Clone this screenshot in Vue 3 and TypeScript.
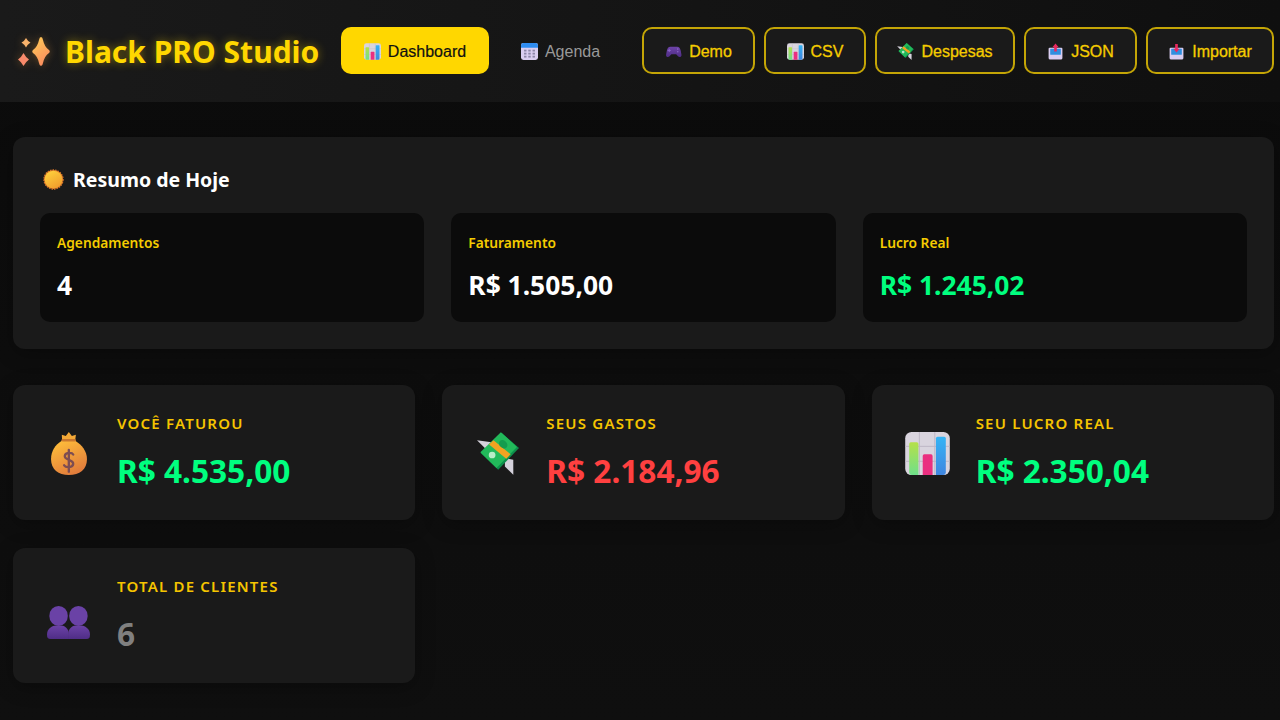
<script setup lang="ts">
interface NavButton {
  label: string
  icon: string
  kind: 'active' | 'plain' | 'outline'
  width: number
}

interface StatCard {
  label: string
  value: string
  icon: string
  tone: string
}

const navButtons: NavButton[] = [
  { label: 'Dashboard', icon: 'chart', kind: 'active', width: 148 },
  { label: 'Agenda', icon: 'calendar', kind: 'plain', width: 125 },
  { label: 'Demo', icon: 'gamepad', kind: 'outline', width: 113 },
  { label: 'CSV', icon: 'chart', kind: 'outline', width: 102 },
  { label: 'Despesas', icon: 'money', kind: 'outline', width: 140 },
  { label: 'JSON', icon: 'outbox', kind: 'outline', width: 113 },
  { label: 'Importar', icon: 'inbox', kind: 'outline', width: 128 }
]

const summary = [
  { label: 'Agendamentos', value: '4', tone: 'white' },
  { label: 'Faturamento', value: 'R$ 1.505,00', tone: 'white' },
  { label: 'Lucro Real', value: 'R$ 1.245,02', tone: 'green' }
]

const stats: StatCard[] = [
  { label: 'VOCÊ FATUROU', value: 'R$ 4.535,00', icon: 'bag', tone: 'green' },
  { label: 'SEUS GASTOS', value: 'R$ 2.184,96', icon: 'money', tone: 'red' },
  { label: 'SEU LUCRO REAL', value: 'R$ 2.350,04', icon: 'chart', tone: 'green' },
  { label: 'TOTAL DE CLIENTES', value: '6', icon: 'people', tone: 'grey' }
]
</script>

<template>
  <div class="page">
    <!-- shared icon shapes -->
    <svg class="sprite" aria-hidden="true">
      <defs>
        <linearGradient id="g-star" x1="0" y1="0" x2="0.5" y2="1">
          <stop offset="0" stop-color="#ffcf55" />
          <stop offset="1" stop-color="#fb8f5f" />
        </linearGradient>
        <linearGradient id="g-sun" x1="0.2" y1="0" x2="0.8" y2="1">
          <stop offset="0" stop-color="#ffd23c" />
          <stop offset="1" stop-color="#f09a2c" />
        </linearGradient>
        <linearGradient id="g-bag" x1="0.2" y1="0" x2="0.7" y2="1">
          <stop offset="0" stop-color="#ffbe3a" />
          <stop offset="1" stop-color="#e0793c" />
        </linearGradient>
        <linearGradient id="g-lime" x1="0" y1="0" x2="0" y2="1">
          <stop offset="0" stop-color="#b5e04a" />
          <stop offset="1" stop-color="#6fe08a" />
        </linearGradient>
        <linearGradient id="g-blue" x1="0" y1="0" x2="0" y2="1">
          <stop offset="0" stop-color="#35b4f5" />
          <stop offset="1" stop-color="#3f86e0" />
        </linearGradient>
        <linearGradient id="g-purple" x1="0" y1="0" x2="0" y2="1">
          <stop offset="0" stop-color="#6d43a8" />
          <stop offset="1" stop-color="#4f2d86" />
        </linearGradient>
      </defs>
      <symbol id="i-sparkles" viewBox="0 0 32 29">
        <path d="M23 0Q24.500 0 25 3Q26.500 10 31 13Q32.500 14.500 31 16Q26.500 19 25 26Q24.500 29 23 29Q21.500 29 21 26Q19.500 19 15 16Q13.500 14.500 15 13Q19.500 10 21 3Q21.500 0 23 0z" fill="url(#g-star)" />
        <path d="M8 1Q9.500 4 12.500 5.500Q9.500 7.500 8 10.500Q6.500 7.500 3.500 5.500Q6.500 4 8 1z" fill="#f9b36b" />
        <path d="M5.500 16Q7.500 20 11 22.500Q7.500 25 5.500 29Q3.500 25 0 22.500Q3.500 20 5.500 16z" fill="#f98a6b" />
      </symbol>
      <symbol id="i-sun" viewBox="0 0 32 32">
        <circle cx="16" cy="16" r="14.500" fill="#e8852c" stroke="#d9772a" stroke-width="2" stroke-dasharray="2.400 1.500" />
        <circle cx="16" cy="16" r="13.500" fill="url(#g-sun)" />
      </symbol>
      <symbol id="i-chart" viewBox="0 0 28 27">
        <rect width="28" height="27" rx="4" fill="#d9d4de" />
        <path d="M0 9h28M0 18.400h28M8.900 0v27M18.600 0v27" stroke="#bdb6c4" stroke-width="0.6" />
        <path d="M2.500 7.500a1 1 0 0 1 1-1h3.800a1 1 0 0 1 1 1V27H4a1.500 1.500 0 0 1-1.500-1.500z" fill="url(#g-lime)" />
        <path d="M11 15a1 1 0 0 1 1-1h4.200a1 1 0 0 1 1 1v12H11z" fill="#ea2f80" />
        <path d="M19.300 4a1 1 0 0 1 1-1h4.200a1 1 0 0 1 1 1v21.500A1.500 1.500 0 0 1 24 27h-4.700z" fill="url(#g-blue)" />
      </symbol>
      <symbol id="i-calendar" viewBox="0 0 28 28">
        <rect width="28" height="28" rx="4" fill="#d9cdf0" />
        <path d="M0 8V4a4 4 0 0 1 4-4h20a4 4 0 0 1 4 4v4z" fill="#2e8cf0" />
        <g fill="#8d86a8">
          <rect x="5" y="11" width="4" height="3" /><rect x="12" y="11" width="4" height="3" /><rect x="19" y="11" width="4" height="3" />
          <rect x="5" y="16" width="4" height="3" /><rect x="12" y="16" width="4" height="3" /><rect x="19" y="16" width="4" height="3" />
          <rect x="5" y="21" width="4" height="3" /><rect x="12" y="21" width="4" height="3" /><rect x="19" y="21" width="4" height="3" />
        </g>
      </symbol>
      <symbol id="i-gamepad" viewBox="0 0 32 32">
        <path d="M9 7h14c3.500 0 5.500 2.500 6.500 7l1.500 8c.6 4-4 6-6.500 3l-3.500-4h-9l-3.500 4c-2.500 3-7.100 1-6.500-3l1.500-8c1-4.500 3-7 6.500-7z" fill="url(#g-purple)" />
        <path d="M8 11v6M5 14h6" stroke="#8a65c4" stroke-width="1.800" />
        <circle cx="24" cy="11.500" r="1.500" fill="#8a65c4" /><circle cx="24" cy="16.500" r="1.500" fill="#8a65c4" />
      </symbol>
      <symbol id="i-money" viewBox="0 0 125 127">
        <path d="M0 24L43 30 33 57z" fill="#d5d2dc" />
        <path d="M83 77L108 82 108 127 83 102z" fill="#d5d2dc" />
        <path d="M73 2L125 47 63 112 11 62z" fill="#0d8f4c" />
        <path d="M71 0L119 44 58 107 10 60z" fill="#22b95a" />
        <path d="M36 37L49 24 100 66 87 79z" fill="#f2a321" />
        <circle cx="45" cy="68" r="10" fill="#b8ecc8" />
        <ellipse cx="78" cy="36" rx="11" ry="14" fill="#149c4e" transform="rotate(-45 78 36)" />
      </symbol>
      <symbol id="i-outbox" viewBox="0 0 32 32">
        <path d="M5 9h22a2 2 0 0 1 2 2v17a3 3 0 0 1-3 3H6a3 3 0 0 1-3-3V11a2 2 0 0 1 2-2z" fill="#d9cdf0" />
        <rect x="6" y="11" width="20" height="11" rx="1" fill="#2f8fe0" />
        <path d="M16 1l6 7h-3.500v8h-5V8H10z" fill="#e8285f" />
      </symbol>
      <symbol id="i-inbox" viewBox="0 0 32 32">
        <path d="M5 9h22a2 2 0 0 1 2 2v17a3 3 0 0 1-3 3H6a3 3 0 0 1-3-3V11a2 2 0 0 1 2-2z" fill="#d9cdf0" />
        <rect x="6" y="11" width="20" height="11" rx="1" fill="#2f8fe0" />
        <path d="M16 18l-6-7h3.500V2h5v9H22z" fill="#e8285f" />
      </symbol>
      <symbol id="i-bag" viewBox="0 0 107 128">
        <path d="M33 24L32 8 44 12 53 0 62 12 74 8 72 24z" fill="#f4a937" />
        <path d="M32 26C12 38 0 58 0 80 0 112 22 128 53 128 85 128 107 112 107 80 107 58 92 38 72 26z" fill="url(#g-bag)" />
        <rect x="31" y="21" width="43" height="7" rx="3.500" fill="#c9772f" />
        <path d="M66 67C62 60 42 60 41 72 40 84 67 82 66 95 65 107 44 107 39 99M53 53v65" fill="none" stroke="#7d4d52" stroke-width="7" stroke-linecap="round" />
      </symbol>
      <symbol id="i-people" viewBox="0 0 130 100">
        <ellipse cx="35" cy="30" rx="28" ry="30" fill="#6a42a6" />
        <ellipse cx="95" cy="30" rx="28" ry="30" fill="#6a42a6" />
        <path d="M0 86C0 68 15 58 35 58 55 58 66 68 66 86V100H10Q0 100 0 86z" fill="url(#g-purple)" />
        <path d="M130 86C130 68 115 58 95 58 75 58 64 68 64 86V100H120Q130 100 130 86z" fill="url(#g-purple)" />
      </symbol>
    </svg>

    <header class="topbar">
      <div class="brand">
        <svg class="brand-icon"><use href="#i-sparkles" /></svg>
        <h1>Black PRO Studio</h1>
      </div>
      <nav class="nav">
        <button
          v-for="btn in navButtons"
          :key="btn.label"
          class="nav-btn"
          :class="btn.kind"
          :style="{ width: btn.width + 'px' }"
        >
          <svg class="nav-icon"><use :href="'#i-' + btn.icon" /></svg>
          {{ btn.label }}
        </button>
      </nav>
    </header>

    <main class="content">
      <section class="today">
        <h2>
          <svg class="sun"><use href="#i-sun" /></svg>
          Resumo de Hoje
        </h2>
        <div class="today-grid">
          <div v-for="item in summary" :key="item.label" class="today-item">
            <div class="today-label">{{ item.label }}</div>
            <div class="today-value" :class="item.tone">{{ item.value }}</div>
          </div>
        </div>
      </section>

      <section class="stats">
        <div v-for="card in stats" :key="card.label" class="stat">
          <div class="stat-icon">
            <svg :class="'icon-' + card.icon"><use :href="'#i-' + card.icon" /></svg>
          </div>
          <div class="stat-body">
            <div class="stat-label">{{ card.label }}</div>
            <div class="stat-value" :class="card.tone">{{ card.value }}</div>
          </div>
        </div>
      </section>
    </main>
  </div>
</template>

<style scoped>
.page {
  min-height: 720px;
  background: linear-gradient(180deg, #0b0b0b, #0f0f0f);
  font-family: "Noto Sans", "Open Sans", sans-serif;
  color: #fff;
  overflow: hidden;
}

.sprite {
  position: absolute;
  width: 0;
  height: 0;
}

.topbar {
  height: 102px;
  box-sizing: border-box;
  padding: 0 6px 2px 18px;
  display: flex;
  align-items: center;
  justify-content: space-between;
  background: linear-gradient(90deg, #1a1a1a, #0f0f0f);
}

.brand {
  display: flex;
  align-items: center;
  gap: 15px;
  margin-top: 2px;
}

.brand-icon {
  width: 32px;
  height: 29px;
  filter: drop-shadow(0 0 4px rgba(255, 170, 60, 0.35));
}

.brand h1 {
  margin: 0;
  font-size: 30px;
  font-weight: 700;
  color: #ffd700;
  text-shadow: 0 0 10px rgba(255, 215, 0, 0.45);
  white-space: nowrap;
}

.nav {
  display: flex;
  align-items: center;
  gap: 9px;
}

.nav-btn {
  height: 47px;
  box-sizing: border-box;
  display: flex;
  align-items: center;
  justify-content: center;
  gap: 7px;
  padding: 4px 0 0;
  border: 2px solid transparent;
  border-radius: 10px;
  font-family: "Liberation Sans", Arial, sans-serif;
  font-size: 16px;
  background: transparent;
}

.nav-btn.active {
  background: #ffd700;
  color: #111;
  -webkit-text-stroke: 0.2px currentColor;
}

.nav-btn.plain {
  color: #999;
  margin-right: 10px;
}

.nav-btn.outline {
  background: #1a1a1a;
  color: #f5cc00;
  border-color: #c4a506;
  -webkit-text-stroke: 0.3px currentColor;
}

.nav-icon {
  width: 17px;
  height: 17px;
  margin-top: -1px;
}

.content {
  padding: 35px 6px 0 13px;
}

.today {
  height: 212px;
  box-sizing: border-box;
  padding: 26px 27px;
  background: #1a1a1a;
  border-radius: 12px;
  box-shadow: 0 4px 20px rgba(0, 0, 0, 0.3);
}

.today h2 {
  margin: 0 0 18px;
  height: 32px;
  display: flex;
  align-items: center;
  gap: 9px;
  font-size: 19.5px;
  font-weight: 700;
  color: #fff;
}

.sun {
  width: 21px;
  height: 21px;
  margin-left: 3px;
}

.today-grid {
  display: grid;
  grid-template-columns: repeat(3, 1fr);
  gap: 27px;
}

.today-item {
  height: 109px;
  box-sizing: border-box;
  padding: 20px 17px;
  background: #0b0b0b;
  border-radius: 10px;
}

.today-label {
  font-size: 13.75px;
  font-weight: 600;
  color: #f5cc00;
}

.today-value {
  margin-top: 15px;
  font-size: 26.4px;
  font-weight: 700;
}

.white {
  color: #fff;
}

.green {
  color: #00ff7f;
}

.red {
  color: #ff4040;
}

.grey {
  color: #808080;
}

.stats {
  margin-top: 36px;
  display: grid;
  grid-template-columns: repeat(3, 1fr);
  gap: 27.6px 27px;
}

.stat {
  height: 135.4px;
  box-sizing: border-box;
  padding: 28px 33px 0;
  display: flex;
  align-items: flex-start;
  gap: 26px;
  background: #1a1a1a;
  border-radius: 12px;
  box-shadow: 0 4px 20px rgba(0, 0, 0, 0.3);
}

.stat-icon {
  width: 45px;
  flex: none;
  margin-top: 19px;
  display: flex;
  justify-content: center;
}

.icon-bag {
  width: 36px;
  height: 43px;
}

.icon-money {
  width: 42px;
  height: 43px;
}

.icon-chart {
  width: 45px;
  height: 43px;
}

.icon-people {
  width: 43px;
  height: 35px;
  margin-top: 10px;
}

.stat-body {
  flex: 1;
}

.stat-label {
  font-size: 15px;
  font-weight: 600;
  letter-spacing: 1.2px;
  color: #f5c400;
}

.stat-value {
  margin-top: 16px;
  font-size: 31.6px;
  font-weight: 700;
}
</style>

<style>
html,
body {
  background: #0d0d0d;
}
</style>
